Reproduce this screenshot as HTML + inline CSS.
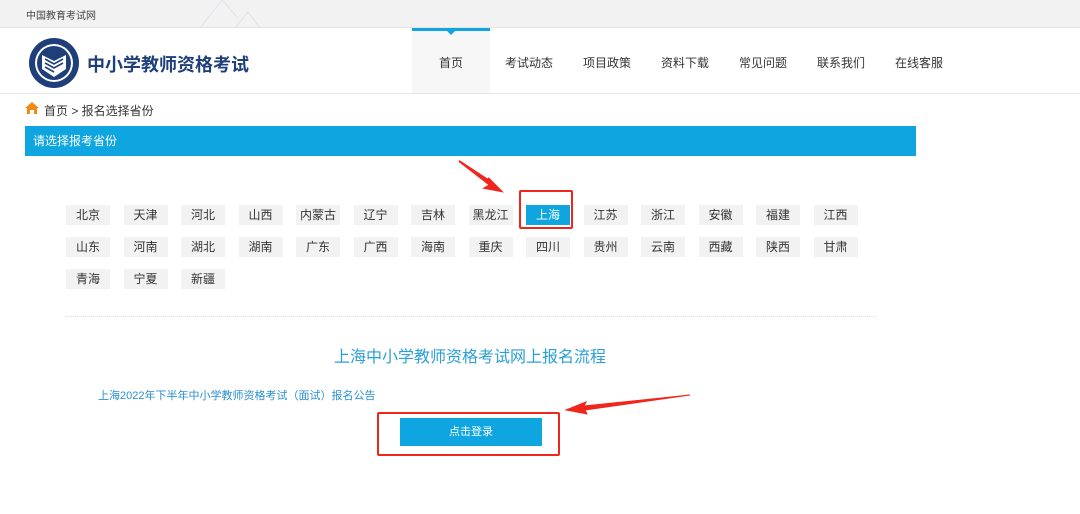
<!DOCTYPE html>
<html><head><meta charset="utf-8"><style>
*{margin:0;padding:0;box-sizing:border-box}
body{width:1080px;height:514px;background:#fff;font-family:"Liberation Sans","Noto Sans CJK SC",sans-serif;position:relative;overflow:hidden;color:#333}
.a{position:absolute}
.top{left:0;top:0;width:1080px;height:28px;background:#f2f2f2;border-bottom:1px solid #e4e4e4;font-size:10px;color:#444;padding:7px 0 0 26px}
.hdr{left:0;top:28px;width:1080px;height:66px;border-bottom:1px solid #e6e6e6}
.nav{top:28px;height:65px;font-size:12px;color:#333;line-height:70px;text-align:center}
.prov{width:44px;height:20px;background:#f2f2f2;font-size:12px;text-align:center;line-height:20px;color:#333}
</style></head><body>
<div class="a top">中国教育考试网</div>
<svg class="a" style="left:190px;top:0" width="100" height="28"><path d="M10 28 L32 0 M32 0 L48 18 M45 28 L58 12 L70 28" stroke="#dde3ea" fill="none"/></svg>
<div class="a hdr"></div>
<svg class="a" style="left:28px;top:37px" width="52" height="52" viewBox="0 0 52 52">
<circle cx="26" cy="26" r="25" fill="#1e3f7a"/><circle cx="26" cy="26" r="19" fill="#fff"/><circle cx="26" cy="26" r="17" fill="#1e3f7a"/>
<path d="M14 18 L26 24 L38 18 L38 32 L26 40 L14 32Z" fill="#fff"/><path d="M17 22 L26 27 L35 22 M17 26 L26 31 L35 26 M17 30 L26 35" stroke="#1e3f7a" stroke-width="1.6" fill="none"/></svg>
<div class="a" style="left:87px;top:51px;font-size:18px;color:#1e3f7a;font-weight:bold">中小学教师资格考试</div>
<div class="a" style="left:412px;top:28px;width:78px;height:65px;background:#f7f7f7;border-top:3px solid #0fa5e0"></div>
<div class="a" style="left:446px;top:30px;width:0;height:0;border-left:5px solid transparent;border-right:5px solid transparent;border-top:5px solid #0fa5e0"></div>
<div class="a nav" style="left:412px;width:78px">首页</div>
<div class="a nav" style="left:490px;width:78px">考试动态</div>
<div class="a nav" style="left:568px;width:78px">项目政策</div>
<div class="a nav" style="left:646px;width:78px">资料下载</div>
<div class="a nav" style="left:724px;width:78px">常见问题</div>
<div class="a nav" style="left:802px;width:78px">联系我们</div>
<div class="a nav" style="left:880px;width:78px">在线客服</div>
<svg class="a" style="left:25px;top:102px" width="14" height="12" viewBox="0 0 14 12"><path d="M7 0 L14 6 L12 6 L12 12 L9 12 L9 8 L5 8 L5 12 L2 12 L2 6 L0 6Z" fill="#f08a16"/></svg>
<div class="a" style="left:44px;top:102px;font-size:12px;color:#333">首页 &gt; 报名选择省份</div>
<div class="a" style="left:25px;top:126px;width:891px;height:30px;background:#0fa5e0;color:#fff;font-size:12px;line-height:30px;padding-left:8px">请选择报考省份</div>
<div id="g"></div>
<div class="a" style="left:66px;top:316px;width:810px;border-top:1px dotted #ddd"></div>
<div class="a" style="left:270px;top:343px;width:400px;text-align:center;font-size:16px;color:#2a9fd8">上海中小学教师资格考试网上报名流程</div>
<div class="a" style="left:98px;top:387px;font-size:11px;color:#2a8fd0">上海2022年下半年中小学教师资格考试（面试）报名公告</div>
<div class="a" style="left:400px;top:418px;width:142px;height:28px;background:#0fa5e0;color:#fff;font-size:11px;text-align:center;line-height:28px">点击登录</div>
<div class="a" style="left:377px;top:412px;width:183px;height:44px;border:2px solid #f0261c;border-radius:2px"></div>
<div class="a" style="left:519px;top:190px;width:54px;height:39px;border:2px solid #f0261c;border-radius:2px"></div>
<svg class="a" style="left:0;top:0" width="1080" height="514">
<path d="M459 161 L491 182 L488 178 L501 191 L485 188 L490 185 Z" fill="#f0261c" stroke="#f0261c" stroke-width="2"/>
<path d="M690 395 L584 406 L586 402 L566 410 L587 414 L585 410 Z" fill="#f0261c" stroke="#f0261c" stroke-width="1"/>
</svg>
<script>
var r=[["北京","天津","河北","山西","内蒙古","辽宁","吉林","黑龙江","上海","江苏","浙江","安徽","福建","江西"],["山东","河南","湖北","湖南","广东","广西","海南","重庆","四川","贵州","云南","西藏","陕西","甘肃"],["青海","宁夏","新疆"]];
var h="";r.forEach(function(row,i){row.forEach(function(n,j){var s=(n=="上海")?"background:#0fa5e0;color:#fff;":"";h+='<div class="a prov" style="'+s+'left:'+(66+j*57.5)+'px;top:'+(205+i*32)+'px">'+n+'</div>';});});
document.getElementById("g").outerHTML=h;
</script>
</body></html>
